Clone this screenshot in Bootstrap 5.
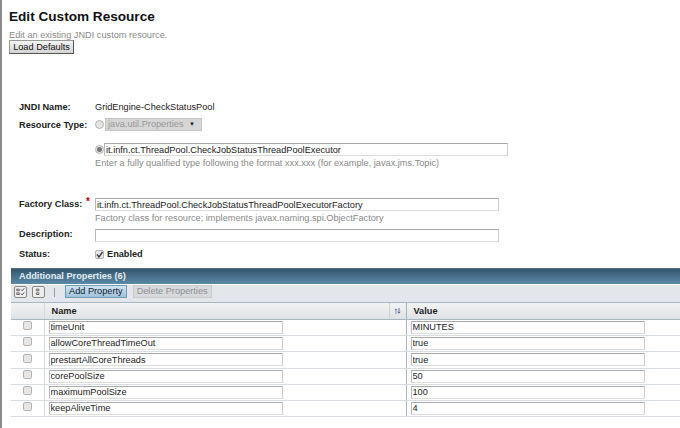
<!DOCTYPE html>
<html lang="en"><head><meta charset="utf-8"><title>Edit Custom Resource</title>
<link href="https://cdn.jsdelivr.net/npm/bootstrap@5.3.0/dist/css/bootstrap.min.css" rel="stylesheet">
<style>
html,body{height:428px;overflow:hidden;background:#fff}
body{font:9.2px/12px "Liberation Sans",Arial,sans-serif;color:#222;border-left:2px solid #8a8a8a}
.pg-title{font-size:13.6px;line-height:18px;font-weight:700;color:#111;margin:8px 0 0 7px}
.pg-help{color:#8a8a8a;margin:3px 0 0 7px;line-height:12px}
.load-btn{display:block;margin:-1px 0 0 7px;width:65px;height:14px;padding:0;font:9.2px/12px "Liberation Sans",sans-serif;color:#111;background:linear-gradient(#f4f4f4,#d4d4d4);border:1px solid #555;border-top-color:#999;border-left-color:#999}
.frm{margin:0 0 0 17px}
.frm-row{display:flex;align-items:flex-start}
.lbl{width:76px;font-weight:700;color:#222;flex:none}
.req{color:#c00;font-weight:700;font-size:10px;line-height:8px;vertical-align:top;margin-left:1px}
.hint{color:#8a8a8a}
.txt{display:block;height:13px;padding:0 1px;font:9.2px/11px "Liberation Sans",sans-serif;color:#222;border:1px solid #bbb;border-top-color:#aaa;border-bottom-color:#ddd;border-right-color:#ccc;background:#fff;border-radius:0;outline:0}
.rd{width:9px;height:9px;border-radius:50%;border:1px solid #b4b4b4;background:#e4e4e4;flex:none;display:block}
.rd-on{background:radial-gradient(circle,#777 0 2px,#e4e4e4 3px)}
.sel{width:97px;height:13px;margin-left:1px;background:#d6d6d6;border:1px solid #c4c4c4;color:#999;padding:0 2px;display:flex;justify-content:space-between;align-items:center;line-height:11px}
.sel b{color:#222;font-size:6px;margin-right:4px}
.cb{width:9px;height:9px;border:1px solid #b4b4b4;border-radius:2px;background:#e6e6e6;flex:none;display:block;position:relative}
.cb svg{display:block;width:9px;height:9px;margin:-1px}
.panel{margin:8px 0 0 9px;width:669px}
.p-title{height:16px;background:linear-gradient(#35566e,#5a8aa8);border-top:1px solid #54707f;color:#e4ebf0;font-weight:700;line-height:14px;padding-left:8px}
.p-tools{height:19px;background:#e3e6ea;border-top:1px solid #fff;border-bottom:1px solid #a9b5bf;display:flex;align-items:flex-start;padding:0 0 0 3px}
.ico{width:13px;height:12px;background:#eee;border:1px solid #888;border-radius:2px;display:block;margin:1px 5px 0 0}
.sep{width:1px;height:9px;background:#999;margin:3px 10px 0 4px}
.tb{height:13px;padding:0 3px;font:9.2px/11px "Liberation Sans",sans-serif;border:1px solid #6f9ab8;background:linear-gradient(#cfe3f0,#9fc3da);color:#123;margin-right:6px}
.tb.off{background:#d8dadd;border-color:#c8cacc;color:#8d9094}
.grid{width:100%;table-layout:fixed;border-collapse:collapse}
.grid th{height:16px;padding:0 0 0 7px;background:linear-gradient(#f2f3f4,#dfe2e5);border-bottom:1px solid #a9b5bf;color:#222;font-size:9.2px;line-height:12px;position:relative}
.grid td{height:16px;padding:0;border-bottom:1px solid #d8dde1;vertical-align:middle}
.grid tr:nth-child(3) td{height:17px}
.grid tr>*:nth-child(1){border-left:0;border-right:1px solid #d5dade}
.grid tr>*:nth-child(2){border-right:1px solid #a9b5bf}
.grid td .txt{margin:0 0 0 4px;width:234px}
.grid td .cb{margin:0 auto 3px}
.sort{position:absolute;right:0;top:0;height:15px;width:17px;border-left:1px solid #cdd2d6;display:flex;align-items:center;justify-content:center}
</style></head><body>
<h1 class="pg-title">Edit Custom Resource</h1>
<div class="pg-help">Edit an existing JNDI custom resource.</div>
<button class="load-btn" type="button">Load Defaults</button>
<div class="frm">
  <div class="frm-row" style="margin-top:47px"><div class="lbl">JNDI Name:</div><div>GridEngine-CheckStatusPool</div></div>
  <div class="frm-row align-items-center" style="margin-top:5px"><div class="lbl">Resource Type:</div><span class="rd"></span><div class="sel">java.util.Properties<b>▼</b></div></div>
  <div class="frm-row align-items-center" style="margin-top:12px;padding-left:76px"><span class="rd rd-on"></span><input class="txt" style="width:404px" value="it.infn.ct.ThreadPool.CheckJobStatusThreadPoolExecutor"></div>
  <div class="hint" style="margin:1px 0 0 76px">Enter a fully qualified type following the format xxx.xxx (for example, javax.jms.Topic)</div>
  <div class="frm-row" style="margin-top:28px"><div class="lbl" style="padding-top:1px">Factory Class:<span class="req"> *</span></div><input class="txt" style="width:404px;margin-top:1px" value="it.infn.ct.ThreadPool.CheckJobStatusThreadPoolExecutorFactory"></div>
  <div class="hint" style="margin:1px 0 0 76px">Factory class for resource; implements javax.naming.spi.ObjectFactory</div>
  <div class="frm-row" style="margin-top:4px"><div class="lbl">Description:</div><input class="txt" style="width:404px;margin-top:1px" value=""></div>
  <div class="frm-row align-items-center" style="margin-top:6px"><div class="lbl">Status:</div><span class="cb"><svg viewBox="0 0 9 9"><path d="M2 4.5l2 2.5 3.500-5" fill="none" stroke="#444" stroke-width="1.5"/></svg></span><b style="margin-left:3px">Enabled</b></div>
</div>
<div class="panel">
  <div class="p-title">Additional Properties (6)</div>
  <div class="p-tools">
    <svg class="ico" viewBox="0 0 13 12"><path d="M2 2.500h3v2H2zM2 7h3v2H2z" fill="none" stroke="#555"/><path d="M7 3l1.500 1.500L11 1.500M7 8l1.500 1.500L11 6.500" fill="none" stroke="#333"/></svg>
    <svg class="ico" style="margin-right:0" viewBox="0 0 13 12"><path d="M4 2.500h3v2H4zM4 7h3v2H4z" fill="none" stroke="#555"/></svg>
    <span class="sep" style="margin-left:9px"></span>
    <button class="tb" type="button">Add Property</button>
    <button class="tb off" type="button">Delete Properties</button>
  </div>
  <table class="grid">
    <colgroup><col style="width:33px"><col style="width:362px"><col></colgroup>
    <thead><tr><th></th><th>Name<span class="sort"><svg width="7" height="6" viewBox="0 0 7 6"><path d="M2 6V1M.8 2.200L2 .8l1.200 1.400" fill="none" stroke="#778" stroke-width=".8"/><path d="M5 0v5M3.800 3.800L5 5.200l1.200-1.400" fill="none" stroke="#35a" stroke-width=".8"/></svg></span></th><th>Value</th></tr></thead>
    <tbody>
      <tr><td><span class="cb"></span></td><td><input class="txt" value="timeUnit"></td><td><input class="txt" value="MINUTES"></td></tr>
      <tr><td><span class="cb"></span></td><td><input class="txt" value="allowCoreThreadTimeOut"></td><td><input class="txt" value="true"></td></tr>
      <tr><td><span class="cb"></span></td><td><input class="txt" value="prestartAllCoreThreads"></td><td><input class="txt" value="true"></td></tr>
      <tr><td><span class="cb"></span></td><td><input class="txt" value="corePoolSize"></td><td><input class="txt" value="50"></td></tr>
      <tr><td><span class="cb"></span></td><td><input class="txt" value="maximumPoolSize"></td><td><input class="txt" value="100"></td></tr>
      <tr><td><span class="cb"></span></td><td><input class="txt" value="keepAliveTime"></td><td><input class="txt" value="4"></td></tr>
    </tbody>
  </table>
</div>
<script src="https://cdn.jsdelivr.net/npm/bootstrap@5.3.0/dist/js/bootstrap.bundle.min.js"></script>
</body></html>
